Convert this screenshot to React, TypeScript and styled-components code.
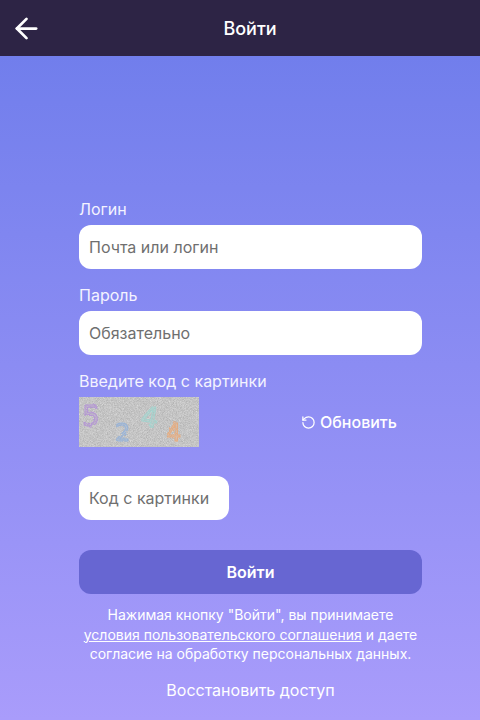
import React from 'react'
import styled, { createGlobalStyle } from 'styled-components'
import { ArrowLeft, RotateCcw } from 'lucide-react'

const GlobalStyle = createGlobalStyle`
  html, body {
    margin: 0;
    padding: 0;
    height: 100%;
  }

  body {
    font-family: Inter, "Noto Sans", sans-serif;
    color: #fff;
  }

  * {
    box-sizing: border-box;
  }
`

const Page = styled.div`
  width: 480px;
  height: 720px;
  overflow: hidden;
  display: flex;
  flex-direction: column;
  background: linear-gradient(180deg, #717eec 56px, #a99cfb 720px);
`

const Header = styled.header`
  height: 56px;
  flex-shrink: 0;
  display: flex;
  align-items: center;
  justify-content: center;
  padding-left: 20px;
  position: relative;
  background: #2d2445;
`

const BackButton = styled.a`
  position: absolute;
  left: 10px;
  top: 12px;
  display: flex;
  color: #fff;
`

const Title = styled.h1`
  margin: 0;
  font-size: 18px;
  font-weight: 500;
`

const Form = styled.form`
  display: flex;
  flex-direction: column;
  padding: 144px 58px 0 79px;
`

const Label = styled.label`
  display: block;
  height: 18px;
  margin-bottom: 7px;
  font-size: 16px;
  line-height: 18px;
  color: #f4f3ff;
`

const Field = styled.div`
  margin-bottom: 17px;
`

const Input = styled.input<{ $short?: boolean }>`
  display: block;
  width: ${p => (p.$short ? '150px' : '100%')};
  height: 44px;
  padding: 0 10px;
  border: 0;
  border-radius: 12px;
  background: #fff;
  font-family: inherit;
  font-size: 16px;
  color: #333;

  &::placeholder {
    color: #6f6f6f;
    opacity: 1;
  }
`

const CaptchaRow = styled.div`
  display: flex;
  align-items: center;
  margin-bottom: 29px;
`

const CaptchaImage = styled.svg`
  display: block;
  width: 120px;
  height: 50px;
  flex-shrink: 0;
`

const RefreshLink = styled.a`
  display: flex;
  align-items: center;
  gap: 4px;
  margin-left: 102px;
  font-size: 16px;
  font-weight: 500;
  color: #fff;
  text-decoration: none;
`

const Submit = styled.button`
  height: 44px;
  margin-top: 30px;
  border: 0;
  border-radius: 12px;
  background: #6766d2;
  color: #fff;
  font-family: inherit;
  font-size: 16px;
  font-weight: 600;
`

const Terms = styled.p`
  margin: 11px 0 0;
  font-size: 14px;
  line-height: 19.5px;
  text-align: center;
  color: #fff;

  a {
    color: inherit;
    text-decoration: underline;
  }
`

const Restore = styled.a`
  margin-top: 16px;
  font-size: 16px;
  line-height: 20px;
  text-align: center;
  color: #fff;
  text-decoration: none;
`

const Captcha = () => (
  <CaptchaImage viewBox="0 0 120 50" role="img" aria-label="captcha">
    <filter id="noise" x="0" y="0" width="100%" height="100%" colorInterpolationFilters="sRGB">
      <feTurbulence type="fractalNoise" baseFrequency="1.3" numOctaves="2" seed="4" />
      <feColorMatrix
        type="matrix"
        values="0.22 0 0 0 0.66  0.22 0 0 0 0.66  0.22 0 0 0 0.66  0 0 0 0 1"
      />
    </filter>
    <filter id="rough">
      <feTurbulence type="fractalNoise" baseFrequency="0.3" numOctaves="1" seed="2" />
      <feDisplacementMap in="SourceGraphic" scale="3" />
    </filter>
    <rect width="120" height="50" filter="url(#noise)" />
    <g fontFamily="DejaVu Sans, sans-serif" strokeWidth="1" fillOpacity="0.45" filter="url(#rough)" opacity="0.85">
      <text x="3" y="29" fontSize="28" fill="#b28fd8" stroke="#b28fd8">5</text>
      <text x="36" y="44" fontSize="24" fill="#8fb0dc" stroke="#8fb0dc">2</text>
      <text x="62" y="30" fontSize="28" fill="#9fd6d0" stroke="#9fd6d0" transform="rotate(8 72 20)">4</text>
      <text x="87" y="44" fontSize="24" fill="#eda873" stroke="#eda873">4</text>
    </g>
  </CaptchaImage>
)

export default function App() {
  return (
    <Page>
      <GlobalStyle />
      <Header>
        <BackButton href="#" title="Назад">
          <ArrowLeft size={33} strokeWidth={2} />
        </BackButton>
        <Title>Войти</Title>
      </Header>

      <Form onSubmit={e => e.preventDefault()}>
        <Field>
          <Label htmlFor="login">Логин</Label>
          <Input id="login" placeholder="Почта или логин" />
        </Field>
        <Field>
          <Label htmlFor="password">Пароль</Label>
          <Input id="password" placeholder="Обязательно" />
        </Field>

        <Label htmlFor="code">Введите код с картинки</Label>
        <CaptchaRow>
          <Captcha />
          <RefreshLink href="#">
            <RotateCcw size={15} strokeWidth={2} />
            Обновить
          </RefreshLink>
        </CaptchaRow>
        <Input id="code" $short placeholder="Код с картинки" />

        <Submit type="submit">Войти</Submit>
        <Terms>
          Нажимая кнопку "Войти", вы принимаете
          <br />
          <a href="#">условия пользовательского соглашения</a> и даете
          <br />
          согласие на обработку персональных данных.
        </Terms>
        <Restore href="#">Восстановить доступ</Restore>
      </Form>
    </Page>
  )
}
